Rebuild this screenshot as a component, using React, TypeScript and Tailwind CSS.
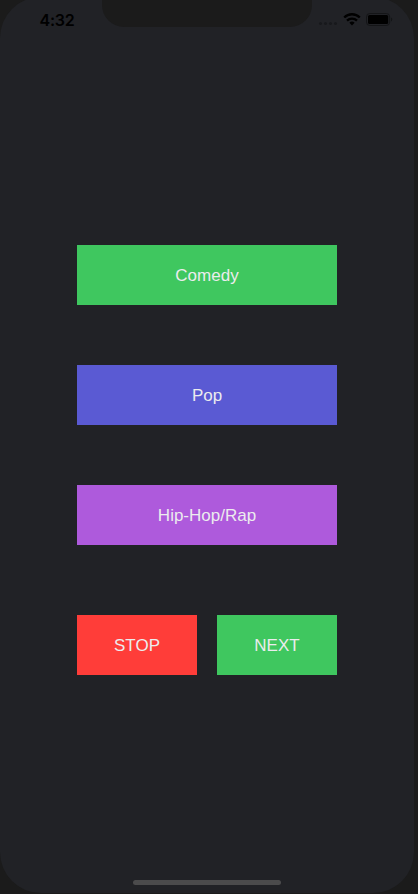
const genres = [
  { name: 'Comedy', color: 'bg-[#3fc75f]' },
  { name: 'Pop', color: 'bg-[#5a5ad3]' },
  { name: 'Hip-Hop/Rap', color: 'bg-[#ae5adc]' },
];

const button =
  "flex h-[60px] items-center justify-center pt-[2px] font-['Liberation_Sans',Arial,sans-serif] text-[17px] text-[#ececee]";

function Wifi() {
  return (
    <svg width="18" height="13" viewBox="0 0 18 13" fill="none" stroke="#000" strokeWidth="2.3">
      <path d="M1.2 4.5a11 11 0 0 1 15.6 0" />
      <path d="M4 7.6a7.1 7.1 0 0 1 10 0" />
      <path d="M9 12.4 6.4 9.8a3.7 3.7 0 0 1 5.2 0z" fill="#000" stroke="none" />
    </svg>
  );
}

function Battery() {
  return (
    <svg width="27" height="13" viewBox="0 0 27 13">
      <rect x="0.5" y="0.5" width="23.2" height="12" rx="3.4" fill="none" stroke="#141517" />
      <rect x="2" y="2" width="20.2" height="9" rx="1.6" fill="#000" />
      <path d="M25 4.5c1.7.6 1.7 3.4 0 4z" fill="#141517" />
    </svg>
  );
}

function StatusBar() {
  return (
    <header className="flex h-[30px] shrink-0 items-start">
      <div className="w-[102px] pl-[39.5px] pt-[13px] font-['Inter',sans-serif] text-[16px] leading-[20px] font-semibold tracking-[-0.2px] text-black">
        4:32
      </div>
      <div className="h-[30px] w-[210px] rounded-b-[22px] bg-[#1b1b1b]" />
      <div className="flex pl-[7px] pt-[16px]">
        <div className="mr-[6px] flex gap-[2px] pt-[9px]">
          {[0, 1, 2, 3].map((i) => (
            <span key={i} className="size-[3px] rounded-full bg-[#18191c]" />
          ))}
        </div>
        <Wifi />
        <div className="ml-[5px]">
          <Battery />
        </div>
      </div>
    </header>
  );
}

export default function App() {
  return (
    <div className="h-[894px] w-[418px] overflow-hidden bg-[#1b1b1b]">
      <div className="-mt-[3px] flex h-[896px] w-[414px] flex-col items-center overflow-hidden rounded-[41px] bg-[#212226]">
        <div className="w-full">
          <StatusBar />
        </div>
        <main className="mt-[218px] flex w-[260px] flex-col gap-[60px]">
          {genres.map((g) => (
            <button key={g.name} className={`${button} ${g.color}`}>
              {g.name}
            </button>
          ))}
          <div className="mt-[10px] flex gap-[20px]">
            <button className={`${button} flex-1 bg-[#ff3d39]`}>STOP</button>
            <button className={`${button} flex-1 bg-[#3fc75f]`}>NEXT</button>
          </div>
        </main>
        <div className="mt-auto mb-[8px] h-[5px] w-[148px] rounded-full bg-[#4b4b4c]" />
      </div>
    </div>
  );
}
